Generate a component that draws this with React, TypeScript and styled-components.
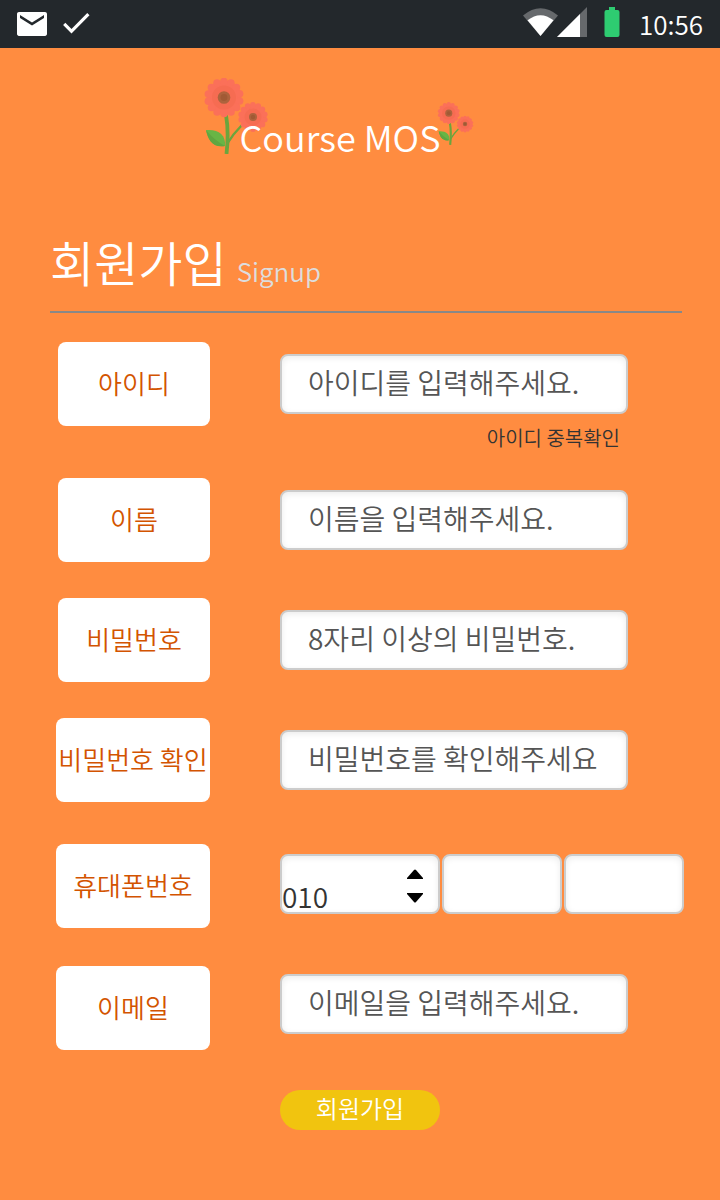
import React from "react";
import styled, { createGlobalStyle } from "styled-components";

const GlobalStyle = createGlobalStyle`
  *, *::before, *::after { box-sizing: border-box; }
  body {
    margin: 0;
    background: #ff8c40;
    font-family: "Noto Sans CJK KR DemiLight", "Noto Sans CJK KR", "Noto Sans", sans-serif;
  }
  button, input, select { font-family: inherit; margin: 0; }
`;

const Page = styled.div`
  min-height: 100vh;
  padding-bottom: 70px;
  background: #ff8c40;
`;

const StatusBar = styled.div`
  display: flex;
  align-items: center;
  justify-content: space-between;
  height: 48px;
  padding: 0 17px 0 14px;
  background: #23282c;
  color: #fff;
`;

const StatusGroup = styled.div<{ $gap?: number }>`
  display: flex;
  align-items: center;
  gap: ${(p) => p.$gap ?? 0}px;
`;

const StatusSignals = styled.span`
  line-height: 0;
  svg { overflow: visible; }
`;

const Clock = styled.time`
  font-size: 26px;
  line-height: 44px;
`;

const LogoBar = styled.header`
  display: flex;
  justify-content: center;
  padding: 64px 40px 0 0;
`;

const Logo = styled.div`
  position: relative;
  color: #fff;
  font-size: 36px;
  line-height: 48px;
  white-space: nowrap;
`;

const LogoText = styled.span`
  position: relative;
`;

const LeftFlower = styled.span`
  position: absolute;
  top: -34px;
  left: -37px;
  line-height: 0;
`;

const RightFlower = styled.span`
  position: absolute;
  top: -10px;
  right: -34px;
  line-height: 0;
`;

const TitleRow = styled.div`
  display: flex;
  align-items: baseline;
  gap: 10px;
  margin: 71px 38px 29px 50px;
  padding-bottom: 20px;
  border-bottom: 2px solid #888;
`;

const Title = styled.h1`
  margin: 0;
  color: #fff;
  font-size: 48px;
  font-weight: 400;
  line-height: 60px;
`;

const Subtitle = styled.span`
  color: #ddd;
  font-size: 26px;
  line-height: 40px;
`;

const Form = styled.form`
  padding: 0 36px 0 56px;
`;

const Row = styled.div<{ $gap?: number }>`
  display: grid;
  grid-template-columns: 154px minmax(0, 1fr);
  column-gap: 70px;
  align-items: start;
  margin-top: ${(p) => p.$gap ?? 36}px;
`;

const Label = styled.label<{ $wide?: boolean }>`
  display: flex;
  align-items: center;
  justify-content: center;
  justify-self: end;
  width: ${(p) => (p.$wide ? 154 : 152)}px;
  height: 84px;
  padding-bottom: 4px;
  border-radius: 8px;
  background: #fff;
  color: #d35400;
  font-size: 26px;
  white-space: nowrap;
`;

const Field = styled.div<{ $inset?: number }>`
  display: flex;
  flex-direction: column;
  width: 100%;
  max-width: 348px;
  padding-top: ${(p) => p.$inset ?? 12}px;
`;

const PhoneField = styled.div`
  display: grid;
  grid-template-columns: 4fr 3fr 3fr;
  gap: 2px;
  padding-top: 10px;
`;

const TextInput = styled.input`
  width: 100%;
  min-width: 0;
  height: 60px;
  padding: 0 26px 4px;
  border: 2px solid #ccc;
  border-radius: 8px;
  background: #fff;
  box-shadow: inset 0 2px 6px rgba(0, 0, 0, 0.08);
  color: #333;
  font-size: 28px;
  &::placeholder { color: #555; opacity: 1; }
`;

const PhoneInput = styled(TextInput)`
  padding: 0 12px;
`;

const SelectBox = styled.div`
  position: relative;
  min-width: 0;
`;

const Select = styled.select`
  appearance: none;
  display: block;
  width: 100%;
  height: 60px;
  padding: 20px 0 0;
  border: 2px solid #ccc;
  border-radius: 8px;
  background: #fff;
  box-shadow: inset 0 2px 6px rgba(0, 0, 0, 0.08);
  color: #333;
  font-size: 28px;
`;

const Arrows = styled.svg`
  position: absolute;
  top: 15px;
  right: 17px;
  pointer-events: none;
`;

const CheckButton = styled.button`
  align-self: flex-end;
  margin: 12px 8px 0 0;
  padding: 0;
  border: 0;
  background: none;
  color: #333;
  font-size: 20px;
  line-height: 24px;
`;

const SubmitButton = styled.button`
  grid-column: 2;
  width: 160px;
  height: 40px;
  padding: 0 0 4px;
  border: 0;
  border-radius: 20px;
  background: #f1c40f;
  color: #fff;
  font-size: 24px;
  line-height: 36px;
`;

const petals = (cx: number, cy: number, ring: number, r: number) =>
  Array.from({ length: 14 }, (_, i) => {
    const a = (i * Math.PI) / 7 + 0.22;
    return <circle key={i} cx={cx + ring * Math.cos(a)} cy={cy + ring * Math.sin(a)} r={r} />;
  });

const Flower = ({ width, height }: { width: number; height: number }) => (
  <svg width={width} height={height} viewBox="0 0 66 76" aria-hidden="true">
    <path d="M23 37 Q26 54 23.500 76" fill="none" stroke="#6ba53d" strokeWidth="3.8" />
    <path d="M24 66 Q30 56 39 47" fill="none" stroke="#6ba53d" strokeWidth="2.4" />
    <path d="M22 68 C9 70 5 61 3 52 C15 51 23 56 22 68Z" fill="#68b545" />
    <path d="M3 52 Q11 62 22 68 C9 70 5 61 3 52Z" fill="#5fa641" />
    <g fill="#fb7059">
      <circle cx="21" cy="19.500" r="17" />
      {petals(21, 19.5, 16, 3.8)}
      <circle cx="50" cy="39" r="12.5" />
      {petals(50, 39, 12, 2.9)}
    </g>
    <circle cx="21" cy="19.500" r="12" fill="#f66c52" />
    <circle cx="50" cy="39" r="8.5" fill="#f66c52" />
    <circle cx="21" cy="19.500" r="6.3" fill="#ad633d" />
    <circle cx="21" cy="19.500" r="3.4" fill="#a05a35" />
    <circle cx="50" cy="39" r="4" fill="#ad633d" />
    <circle cx="50" cy="39" r="2.2" fill="#a05a35" />
  </svg>
);

const MailIcon = () => (
  <svg width="36" height="36" viewBox="0 0 24 24" fill="#fff" aria-hidden="true">
    <path d="M20.7 4H3.3C2.6 4 2 4.6 2 5.3V18.7C2 19.4 2.6 20 3.3 20h17.4c.7 0 1.3-.6 1.3-1.3V5.3C22 4.6 21.4 4 20.7 4zM20 8l-8 5-8-5V6l8 5 8-5v2z" />
  </svg>
);

const CheckIcon = () => (
  <svg width="36" height="36" viewBox="0 0 24 24" fill="#fff" aria-hidden="true">
    <path d="M9 15.4 4.9 11.200l-1.500 1.500L9 18.400 21 6.200l-1.500-1.500z" />
  </svg>
);

const SignalIcons = () => (
  <svg width="98" height="32" viewBox="0 0 98 32" aria-hidden="true">
    <path d="M0 7.500 Q17.500 -7 35 7.500 L17.500 28Z" fill="#66696c" />
    <path d="M4.500 12.300 Q17.500 2 30.500 12.300 L17.500 28Z" fill="#fff" />
    <path d="M34 29 64 -1V29Z" fill="#66696c" />
    <path d="M34 29 57 6V29Z" fill="#fff" />
    <path d="M86 -1h6v3h2.500q2 0 2 2v23q0 2-2 2h-11q-2 0-2-2V4q0-2 2-2H86z" fill="#2ecc71" />
  </svg>
);

type TextRowProps = {
  id: string;
  label: string;
  placeholder: string;
  type?: string;
  gap?: number;
  inset?: number;
  wide?: boolean;
  children?: React.ReactNode;
};

const TextRow = ({ id, label, placeholder, type = "text", gap, inset, wide, children }: TextRowProps) => (
  <Row $gap={gap}>
    <Label htmlFor={id} $wide={wide}>{label}</Label>
    <Field $inset={inset}>
      <TextInput id={id} type={type} placeholder={placeholder} />
      {children}
    </Field>
  </Row>
);

export default function App() {
  return (
    <Page>
      <GlobalStyle />
      <StatusBar>
        <StatusGroup $gap={8}>
          <MailIcon />
          <CheckIcon />
        </StatusGroup>
        <StatusGroup $gap={18}>
          <StatusSignals><SignalIcons /></StatusSignals>
          <Clock>10:56</Clock>
        </StatusGroup>
      </StatusBar>
      <LogoBar>
        <Logo>
          <LeftFlower><Flower width={66} height={76} /></LeftFlower>
          <RightFlower><Flower width={37} height={43} /></RightFlower>
          <LogoText>Course MOS</LogoText>
        </Logo>
      </LogoBar>
      <main>
        <TitleRow>
          <Title>회원가입</Title>
          <Subtitle>Signup</Subtitle>
        </TitleRow>
        <Form onSubmit={(e) => e.preventDefault()}>
          <TextRow id="userid" label="아이디" placeholder="아이디를 입력해주세요." gap={0}>
            <CheckButton type="button">아이디 중복확인</CheckButton>
          </TextRow>
          <TextRow id="name" label="이름" placeholder="이름을 입력해주세요." gap={28} />
          <TextRow id="password" type="password" label="비밀번호" placeholder="8자리 이상의 비밀번호." />
          <TextRow id="confirm" type="password" label="비밀번호 확인" placeholder="비밀번호를 확인해주세요" wide />
          <Row $gap={42}>
            <Label htmlFor="phone" $wide>휴대폰번호</Label>
            <PhoneField>
              <SelectBox>
                <Select id="phone" defaultValue="010">
                  <option>010</option>
                  <option>011</option>
                  <option>016</option>
                </Select>
                <Arrows width="16" height="34" viewBox="0 0 16 34" aria-hidden="true">
                  <path d="M0 9 7 1Q8 0 9 1L16 9V10H0ZM0 24H16V25L9 33Q8 34 7 33L0 25Z" />
                </Arrows>
              </SelectBox>
              <PhoneInput type="tel" aria-label="휴대폰번호 가운데 자리" />
              <PhoneInput type="tel" aria-label="휴대폰번호 끝자리" />
            </PhoneField>
          </Row>
          <TextRow id="email" type="email" label="이메일" placeholder="이메일을 입력해주세요." gap={38} inset={8} wide />
          <Row $gap={40}>
            <SubmitButton type="submit">회원가입</SubmitButton>
          </Row>
        </Form>
      </main>
    </Page>
  );
}
